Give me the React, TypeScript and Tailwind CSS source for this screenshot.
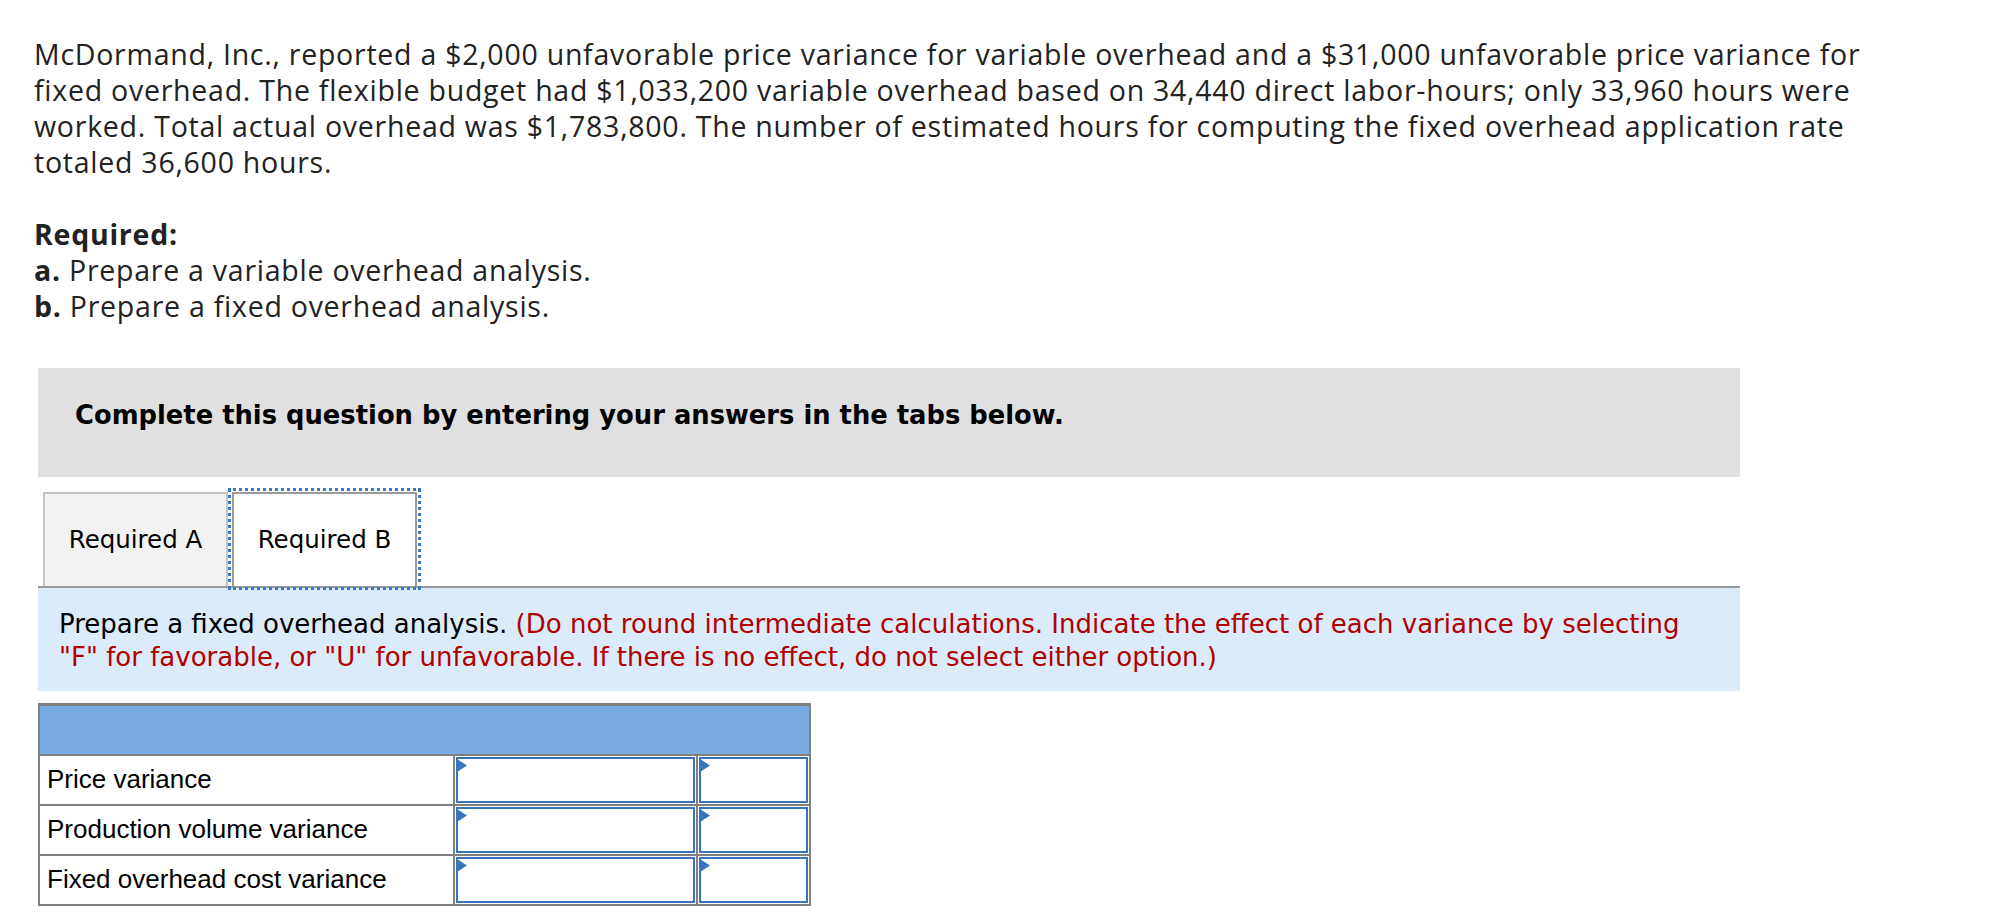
const verdana = "font-['Verdana','DejaVu_Sans',sans-serif]";

function InputCell({ wide }: { wide?: boolean }) {
  return (
    <div className={`relative border-l-2 border-[#808080] ${wide ? 'w-[243px]' : 'flex-1'}`}>
      <div className="absolute inset-[1px] border-2 border-[#3a74bd] bg-white" />
      <svg className="absolute left-[2px] top-[3px]" width="10" height="13" viewBox="0 0 10 13">
        <polygon points="0,0 10,6.5 0,13" fill="#3a74bd" />
      </svg>
    </div>
  );
}

function Row({ label }: { label: string }) {
  return (
    <div className="flex h-[50px] border-t-2 border-[#808080]">
      <div className="flex w-[413px] items-center pb-[2px] pl-[7px] font-['Liberation_Sans',Arial,sans-serif] text-[26px] text-black">
        {label}
      </div>
      <InputCell wide />
      <InputCell />
    </div>
  );
}

export default function App() {
  return (
    <div className="min-h-screen bg-white pb-10">
      <div className="pl-[34px] pt-[36px] font-['Open_Sans',sans-serif] text-[28.5px] leading-[36px] tracking-[0.75px] text-[#222]">
        <p className="whitespace-nowrap">
          McDormand, Inc., reported a $2,000 unfavorable price variance for variable overhead and a $31,000 unfavorable price variance for
          <br />
          fixed overhead. The flexible budget had $1,033,200 variable overhead based on 34,440 direct labor-hours; only 33,960 hours were
          <br />
          worked. Total actual overhead was $1,783,800. The number of estimated hours for computing the fixed overhead application rate
          <br />
          totaled 36,600 hours.
        </p>
        <p className="mt-[36px] font-bold">Required:</p>
        <p>
          <span className="font-bold">a.</span> Prepare a variable overhead analysis.
        </p>
        <p>
          <span className="font-bold">b.</span> Prepare a fixed overhead analysis.
        </p>
      </div>

      <div className="ml-[38px] mt-[44px] w-[1702px]">
        <div className={`h-[109px] bg-[#e0e0e0] pl-[37px] pt-[32px] ${verdana} text-[25.8px] leading-[30px] font-bold text-black`}>
          Complete this question by entering your answers in the tabs below.
        </div>

        <div className={`mt-[15px] flex gap-[4px] border-b-2 border-[#999999] pl-[5px] ${verdana} text-[24.5px] text-black`}>
          <div className="flex h-[94px] w-[185px] items-center justify-center border-2 border-b-0 border-[#c4c4c4] bg-[#f2f2f2]">
            Required A
          </div>
          <div className="flex h-[94px] w-[185px] items-center justify-center border-2 border-b-0 border-[#999999] bg-white outline-[3px] outline-offset-[1px] outline-dotted outline-[#3b78c4]">
            Required B
          </div>
        </div>

        <div className={`bg-[#dcebf9] px-[21px] pb-[17px] pt-[20px] ${verdana} text-[26px] leading-[33px] text-black`}>
          <span className="whitespace-nowrap">
            Prepare a fixed overhead analysis.{' '}
            <span className="text-[#b00000]">
              (Do not round intermediate calculations. Indicate the effect of each variance by selecting
              <br />
              "F" for favorable, or "U" for unfavorable. If there is no effect, do not select either option.)
            </span>
          </span>
        </div>

        <div className="mt-[12px] w-[773px] border-2 border-t-[3px] border-[#808080]">
          <div className="h-[48px] bg-[#79ade2]" />
          <Row label="Price variance" />
          <Row label="Production volume variance" />
          <Row label="Fixed overhead cost variance" />
        </div>
      </div>
    </div>
  );
}
